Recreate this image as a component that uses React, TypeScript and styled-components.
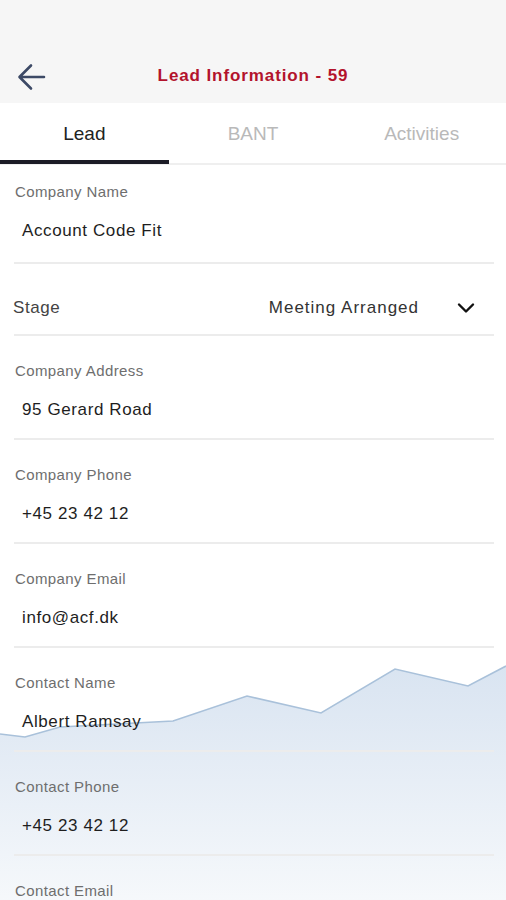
import React from "react";
import styled, { createGlobalStyle } from "styled-components";

const GlobalStyle = createGlobalStyle`
  html, body {
    margin: 0;
    padding: 0;
    background: #ffffff;
    font-family: "Liberation Sans", Arial, sans-serif;
  }
`;

type FieldData = { label: string; value: string };

const fields: FieldData[] = [
  { label: "Company Address", value: "95 Gerard Road" },
  { label: "Company Phone", value: "+45 23 42 12" },
  { label: "Company Email", value: "info@acf.dk" },
  { label: "Contact Name", value: "Albert Ramsay" },
  { label: "Contact Phone", value: "+45 23 42 12" },
  { label: "Contact Email", value: "albert@acf.dk" },
];

const chartPoints = "0,74 25,77 60,67 173,61 247,36 321,53 395,9 468,26 506,6";

const App = () => {
  return (
    <Page>
      <GlobalStyle />
      <TopBar>
        <Header>
          <BackButton aria-label="Back">
            <svg width="30" height="30" viewBox="0 0 30 30" fill="none">
              <path
                d="M28 15H4M15 3.5L3.5 15L15 26.5"
                stroke="#3d4a66"
                strokeWidth="2.6"
                strokeLinecap="round"
                strokeLinejoin="round"
              />
            </svg>
          </BackButton>
          <Title>Lead Information - 59</Title>
        </Header>
      </TopBar>

      <Tabs>
        <Tab $active>Lead</Tab>
        <Tab>BANT</Tab>
        <Tab>Activities</Tab>
      </Tabs>

      <Body>
        <Chart width="506" height="260" viewBox="0 0 506 260" preserveAspectRatio="none">
          <defs>
            <linearGradient id="area" x1="0" y1="0" x2="0" y2="1">
              <stop offset="0" stopColor="#d9e4f1" />
              <stop offset="0.55" stopColor="#eaf0f7" />
              <stop offset="1" stopColor="#f8fafc" />
            </linearGradient>
          </defs>
          <polygon points={`${chartPoints} 506,260 0,260`} fill="url(#area)" />
          <polyline points={chartPoints} fill="none" stroke="#a9c1da" strokeWidth="1.6" />
        </Chart>

        <Form>
          <Field $first>
            <Label>Company Name</Label>
            <Value>Account Code Fit</Value>
          </Field>

          <StageRow>
            <StageLabel>Stage</StageLabel>
            <StageValue>
              Meeting Arranged
              <svg width="18" height="12" viewBox="0 0 18 12" fill="none">
                <path
                  d="M2 2.5L9 9.5L16 2.5"
                  stroke="#111"
                  strokeWidth="2.4"
                  strokeLinecap="round"
                  strokeLinejoin="round"
                />
              </svg>
            </StageValue>
          </StageRow>

          {fields.map((f, i) => (
            <Field key={i}>
              <Label>{f.label}</Label>
              <Value>{f.value}</Value>
            </Field>
          ))}
        </Form>
      </Body>
    </Page>
  );
};

export default App;

const Page = styled.div`
  width: 506px;
  height: 900px;
  overflow: hidden;
  background: #ffffff;
`;

const TopBar = styled.div`
  background: #f6f6f6;
  padding-top: 40px;
`;

const Header = styled.div`
  height: 63px;
  box-sizing: border-box;
  padding-top: 9px;
  display: flex;
  align-items: center;
  justify-content: center;
  position: relative;
`;

const BackButton = styled.div`
  position: absolute;
  left: 16px;
  top: 22px;
  width: 30px;
  height: 30px;
  display: flex;
`;

const Title = styled.div`
  color: #b3132c;
  font-size: 17px;
  font-weight: 700;
  letter-spacing: 0.9px;
`;

const Tabs = styled.div`
  display: grid;
  grid-template-columns: 1fr 1fr 1fr;
  height: 60px;
  border-bottom: 2px solid #efefef;
  background: #ffffff;
`;

const Tab = styled.div<{ $active?: boolean }>`
  display: flex;
  align-items: center;
  justify-content: center;
  font-size: 19px;
  color: ${(p) => (p.$active ? "#222222" : "#b9b9b9")};
  box-shadow: ${(p) => (p.$active ? "inset 0 -4px 0 #1c1c26" : "none")};
  margin-bottom: -1px;
`;

const Body = styled.div`
  position: relative;
`;

const Chart = styled.svg`
  position: absolute;
  left: 0;
  top: 495px;
  z-index: 0;
`;

const Form = styled.div`
  position: relative;
  z-index: 1;
  padding: 0 12px 0 14px;
`;

const Field = styled.div<{ $first?: boolean }>`
  box-sizing: border-box;
  height: ${(p) => (p.$first ? "99px" : "104px")};
  padding-top: ${(p) => (p.$first ? "17px" : "25px")};
  border-bottom: 2px solid #ececec;
`;

const Label = styled.div`
  font-size: 15px;
  line-height: 20px;
  letter-spacing: 0.4px;
  color: #6e6e6e;
  padding-left: 1px;
`;

const Value = styled.div`
  margin-top: 17px;
  font-size: 17px;
  line-height: 24px;
  letter-spacing: 0.6px;
  color: #1e1e1e;
  padding-left: 8px;
`;

const StageRow = styled.div`
  height: 72px;
  box-sizing: border-box;
  padding-top: 18px;
  border-bottom: 2px solid #ececec;
  display: flex;
  align-items: center;
  justify-content: space-between;
`;

const StageLabel = styled.div`
  font-size: 17px;
  letter-spacing: 0.6px;
  color: #444444;
  margin-left: -1px;
`;

const StageValue = styled.div`
  display: flex;
  align-items: center;
  gap: 38px;
  font-size: 17px;
  letter-spacing: 1px;
  color: #333333;
  padding-right: 19px;
`;
